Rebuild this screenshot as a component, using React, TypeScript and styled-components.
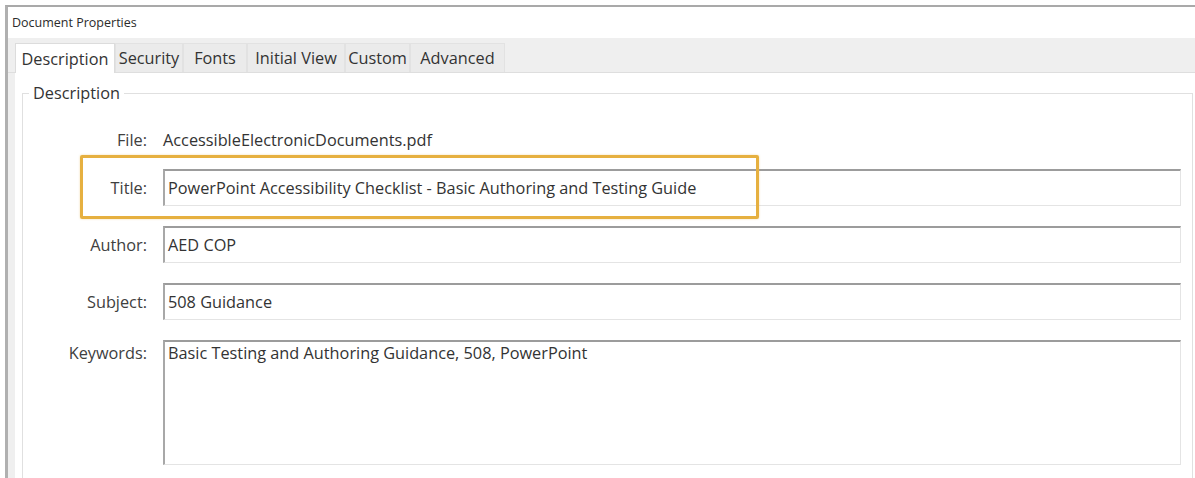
import styled, { createGlobalStyle } from "styled-components";

const GlobalStyle = createGlobalStyle`
  html, body {
    margin: 0;
    padding: 0;
    background: #fff;
  }
  body {
    font-family: "Open Sans", "Noto Sans", sans-serif;
    color: #333;
    overflow: hidden;
  }
`;

type Tab = { label: string; width: number };

const tabs: Tab[] = [
  { label: "Description", width: 100 },
  { label: "Security", width: 68 },
  { label: "Fonts", width: 64 },
  { label: "Initial View", width: 98 },
  { label: "Custom", width: 65 },
  { label: "Advanced", width: 95 },
];

type Field = { label: string; value: string; multiline?: boolean; highlight?: boolean };

const fields: Field[] = [
  {
    label: "Title:",
    value: "PowerPoint Accessibility Checklist - Basic Authoring and Testing Guide",
    highlight: true,
  },
  { label: "Author:", value: "AED COP" },
  { label: "Subject:", value: "508 Guidance" },
  {
    label: "Keywords:",
    value: "Basic Testing and Authoring Guidance, 508, PowerPoint",
    multiline: true,
  },
];

export default function App() {
  return (
    <>
      <GlobalStyle />
      <Window>
        <TitleBar>Document Properties</TitleBar>
        <TabStrip>
          {tabs.map((t, i) => (
            <TabButton key={t.label} $active={i === 0} $width={t.width}>
              {t.label}
            </TabButton>
          ))}
        </TabStrip>
        <Body>
          <Group>
            <Legend>Description</Legend>
            <FileRow>
              <Label>File:</Label>
              <FileName>AccessibleElectronicDocuments.pdf</FileName>
            </FileRow>
            <Rows>
              {fields.map((f) => (
                <Row key={f.label} $multiline={f.multiline}>
                  <Label $top={f.multiline}>{f.label}</Label>
                  <TextBox $multiline={f.multiline}>{f.value}</TextBox>
                  {f.highlight && <Highlight />}
                </Row>
              ))}
            </Rows>
          </Group>
        </Body>
      </Window>
    </>
  );
}

const Window = styled.div`
  margin: 5px 0 0 5px;
  height: 473px;
  overflow: hidden;
  border-top: 2px solid #a9a9a9;
  border-left: 3px solid #b0b0b0;
  background: #fff;
  display: flex;
  flex-direction: column;
  & > * {
    flex-shrink: 0;
  }
`;

const TitleBar = styled.div`
  height: 31px;
  display: flex;
  align-items: center;
  padding-left: 4px;
  font-size: 12.5px;
  color: #2b2b2b;
`;

const TabStrip = styled.div`
  height: 35px;
  display: flex;
  align-items: flex-end;
  padding-left: 7px;
  background: #efefef;
  border-bottom: 1px solid #dedede;
  box-sizing: border-box;
`;

const TabButton = styled.div<{ $active?: boolean; $width: number }>`
  width: ${(p) => p.$width}px;
  height: ${(p) => (p.$active ? 30 : 29)}px;
  box-sizing: border-box;
  display: flex;
  align-items: center;
  justify-content: center;
  font-size: 16.3px;
  color: #333;
  background: ${(p) => (p.$active ? "#fff" : "#ebebeb")};
  border: 1px solid ${(p) => (p.$active ? "#dcdcdc" : "#e2e2e2")};
  border-bottom: none;
  margin-bottom: ${(p) => (p.$active ? -1 : 0)}px;
  white-space: nowrap;
`;

const Body = styled.div`
  border-left: 7px solid #efefef;
  padding: 9px 2px 0 7px;
`;

const Group = styled.fieldset`
  margin: 0;
  padding: 18px 11px 0 0;
  border: 1px solid #e0e0e0;
  height: 440px;
  box-sizing: border-box;
`;

const Legend = styled.legend`
  margin-left: 6px;
  padding: 0 4px;
  font-size: 16.3px;
  line-height: 22px;
  color: #333;
`;

const FileRow = styled.div`
  display: grid;
  grid-template-columns: 124px 1fr;
  column-gap: 16px;
  align-items: center;
  height: 36px;
  margin-bottom: 11px;
`;

const Label = styled.div<{ $top?: boolean }>`
  text-align: right;
  font-size: 16.3px;
  color: #404040;
  align-self: ${(p) => (p.$top ? "start" : "center")};
  padding-top: ${(p) => (p.$top ? 2 : 0)}px;
`;

const FileName = styled.div`
  font-size: 16.3px;
  color: #333;
`;

const Rows = styled.div`
  display: flex;
  flex-direction: column;
  gap: 20px;
`;

const Row = styled.div<{ $multiline?: boolean }>`
  position: relative;
  display: grid;
  grid-template-columns: 124px 1fr;
  column-gap: 16px;
  height: ${(p) => (p.$multiline ? 125 : 37)}px;
`;

const TextBox = styled.div<{ $multiline?: boolean }>`
  box-sizing: border-box;
  height: 100%;
  display: flex;
  align-items: ${(p) => (p.$multiline ? "flex-start" : "center")};
  padding: 0 6px 0 3px;
  font-size: 16.3px;
  line-height: 22px;
  color: #333;
  background: #fff;
  border-top: 2px solid #9c9c9c;
  border-left: 2px solid #a8a8a8;
  border-right: 1px solid #e4e4e4;
  border-bottom: 1px solid #e4e4e4;
`;

const Highlight = styled.div`
  position: absolute;
  left: 57px;
  top: -14px;
  width: 679px;
  height: 64px;
  box-sizing: border-box;
  border: 3px solid #e6b040;
  border-radius: 2px;
  box-shadow: 0 0 2px rgba(230, 176, 64, 0.5);
  pointer-events: none;
`;
